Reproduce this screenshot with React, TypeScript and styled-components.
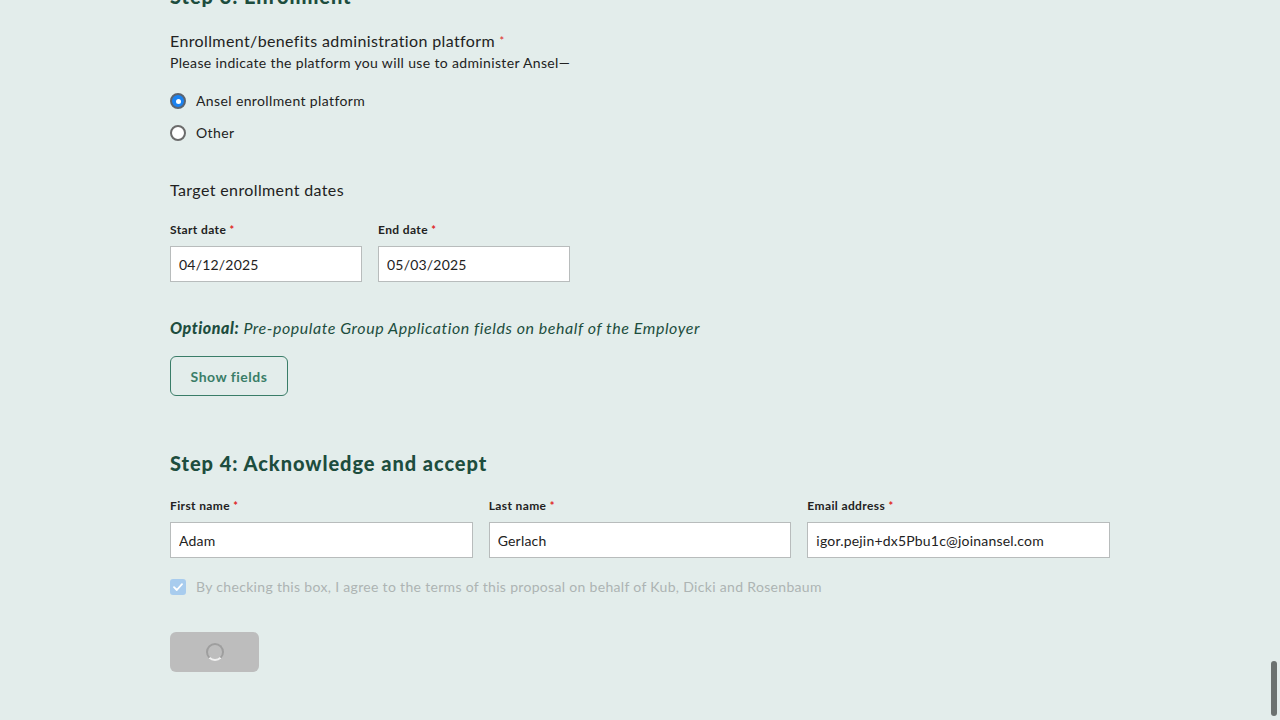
import styled, { createGlobalStyle, keyframes } from "styled-components";

const GlobalStyle = createGlobalStyle`
  html, body {
    margin: 0;
    padding: 0;
    background: #e3edeb;
    overflow: hidden;
  }
  body {
    font-family: Lato, "Noto Sans", sans-serif;
    color: #222;
    letter-spacing: 0.38px;
  }
`;

export default function App() {
  return (
    <>
      <GlobalStyle />
      <Page>
        <Section>
          <StepTitle>Step 3: Enrollment</StepTitle>

          <Question>
            Enrollment/benefits administration platform <Req>*</Req>
          </Question>
          <Hint>Please indicate the platform you will use to administer Ansel—</Hint>

          <RadioList>
            <RadioRow>
              <Radio $checked />
              Ansel enrollment platform
            </RadioRow>
            <RadioRow>
              <Radio />
              Other
            </RadioRow>
          </RadioList>

          <SubTitle>Target enrollment dates</SubTitle>
          <DateRow>
            <Field>
              <Label>
                Start date <Req>*</Req>
              </Label>
              <Input defaultValue="04/12/2025" />
            </Field>
            <Field>
              <Label>
                End date <Req>*</Req>
              </Label>
              <Input defaultValue="05/03/2025" />
            </Field>
          </DateRow>

          <OptionalText>
            <b>Optional:</b> Pre-populate Group Application fields on behalf of the Employer
          </OptionalText>
          <OutlineButton>Show fields</OutlineButton>
        </Section>

        <Section>
          <StepTitle>Step 4: Acknowledge and accept</StepTitle>
          <NameGrid>
            <Field>
              <Label>
                First name <Req>*</Req>
              </Label>
              <Input defaultValue="Adam" />
            </Field>
            <Field>
              <Label>
                Last name <Req>*</Req>
              </Label>
              <Input defaultValue="Gerlach" />
            </Field>
            <Field>
              <Label>
                Email address <Req>*</Req>
              </Label>
              <Input defaultValue="igor.pejin+dx5Pbu1c@joinansel.com" />
            </Field>
          </NameGrid>

          <Agree>
            <CheckBox>
              <svg width="10" height="8" viewBox="0 0 10 8">
                <path d="M1 4.2 L3.8 7 L9 1.2" fill="none" stroke="#fff" strokeWidth="1.8" strokeLinecap="round" strokeLinejoin="round" />
              </svg>
            </CheckBox>
            By checking this box, I agree to the terms of this proposal on behalf of Kub, Dicki and Rosenbaum
          </Agree>

          <SubmitButton disabled>
            <Spinner />
          </SubmitButton>
        </Section>
      </Page>
      <ScrollThumb />
    </>
  );
}

const spin = keyframes`
  to { transform: rotate(360deg); }
`;

const Page = styled.main`
  width: 940px;
  margin: -17px auto 0 170px;
  display: flex;
  flex-direction: column;
  gap: 54px;
`;

const Section = styled.section`
  display: flex;
  flex-direction: column;
  align-items: flex-start;
`;

const StepTitle = styled.h2`
  margin: 0;
  font-family: Lato, sans-serif;
  font-weight: 900;
  font-size: 20px;
  line-height: 26px;
  letter-spacing: 0.95px;
  color: #1d4d3e;
`;

const Question = styled.div`
  margin-top: 21px;
  font-size: 16px;
  line-height: 22px;
  color: #222;
`;

const Req = styled.span`
  color: #e02424;
  font-size: 11px;
  vertical-align: top;
`;

const Hint = styled.div`
  margin-top: 1px;
  font-size: 14px;
  line-height: 20px;
  letter-spacing: 0.35px;
  color: #222;
`;

const RadioList = styled.div`
  margin-top: 18px;
  display: flex;
  flex-direction: column;
  gap: 12px;
`;

const RadioRow = styled.label`
  display: flex;
  align-items: center;
  gap: 10px;
  font-size: 14px;
  line-height: 20px;
  color: #222;
`;

const Radio = styled.span<{ $checked?: boolean }>`
  width: 16px;
  height: 16px;
  box-sizing: border-box;
  border-radius: 50%;
  border: 2px solid ${(p) => (p.$checked ? "#5b6470" : "#6b6b6b")};
  background: ${(p) => (p.$checked ? "#1a82f0" : "#fff")};
  display: flex;
  align-items: center;
  justify-content: center;

  &::after {
    content: "";
    width: 5px;
    height: 5px;
    border-radius: 50%;
    background: #fff;
    display: ${(p) => (p.$checked ? "block" : "none")};
  }
`;

const SubTitle = styled.div`
  margin-top: 36px;
  font-size: 16px;
  line-height: 22px;
  color: #222;
`;

const DateRow = styled.div`
  margin-top: 21px;
  display: grid;
  grid-template-columns: 192px 192px;
  gap: 16px;
`;

const Field = styled.div`
  display: flex;
  flex-direction: column;
  gap: 8px;
`;

const Label = styled.label`
  font-size: 12px;
  font-weight: 700;
  line-height: 16px;
  color: #222;
`;

const Input = styled.input`
  box-sizing: border-box;
  width: 100%;
  height: 36px;
  padding: 0 8px;
  border: 1px solid #b8bcbc;
  background: #fff;
  font-family: Lato, sans-serif;
  font-size: 14px;
  letter-spacing: 0.2px;
  color: #222;
  outline: none;
`;

const OptionalText = styled.p`
  margin: 35px 0 0;
  font-size: 16px;
  line-height: 22px;
  font-style: italic;
  letter-spacing: 0.55px;
  color: #1d4d3e;

  b {
    font-weight: 900;
  }
`;

const OutlineButton = styled.button`
  margin-top: 17px;
  width: 118px;
  height: 40px;
  border: 1px solid #3a7d68;
  border-radius: 6px;
  background: transparent;
  font-family: Lato, sans-serif;
  font-weight: 700;
  font-size: 14px;
  letter-spacing: 0.5px;
  color: #3a7d68;
`;

const NameGrid = styled.div`
  margin-top: 22px;
  width: 100%;
  display: grid;
  grid-template-columns: repeat(3, 1fr);
  gap: 16px;
`;

const Agree = styled.label`
  margin-top: 21px;
  display: flex;
  align-items: center;
  gap: 10px;
  font-size: 14px;
  line-height: 16px;
  letter-spacing: 0.32px;
  color: #adb4b3;
`;

const CheckBox = styled.span`
  width: 16px;
  height: 16px;
  border-radius: 3px;
  background: #a8ccee;
  display: flex;
  align-items: center;
  justify-content: center;
`;

const SubmitButton = styled.button`
  margin-top: 37px;
  width: 89px;
  height: 40px;
  border: none;
  border-radius: 6px;
  background: #bdbdbd;
  display: flex;
  align-items: center;
  justify-content: center;
`;

const Spinner = styled.span`
  width: 14px;
  height: 14px;
  border-radius: 50%;
  border: 2px solid #9e9e9e;
  border-bottom-color: #f0f0f0;
  animation: ${spin} 1s linear infinite;
`;

const ScrollThumb = styled.div`
  position: fixed;
  right: 3px;
  top: 661px;
  width: 6px;
  height: 55px;
  border-radius: 3px;
  background: #6c7270;
`;
